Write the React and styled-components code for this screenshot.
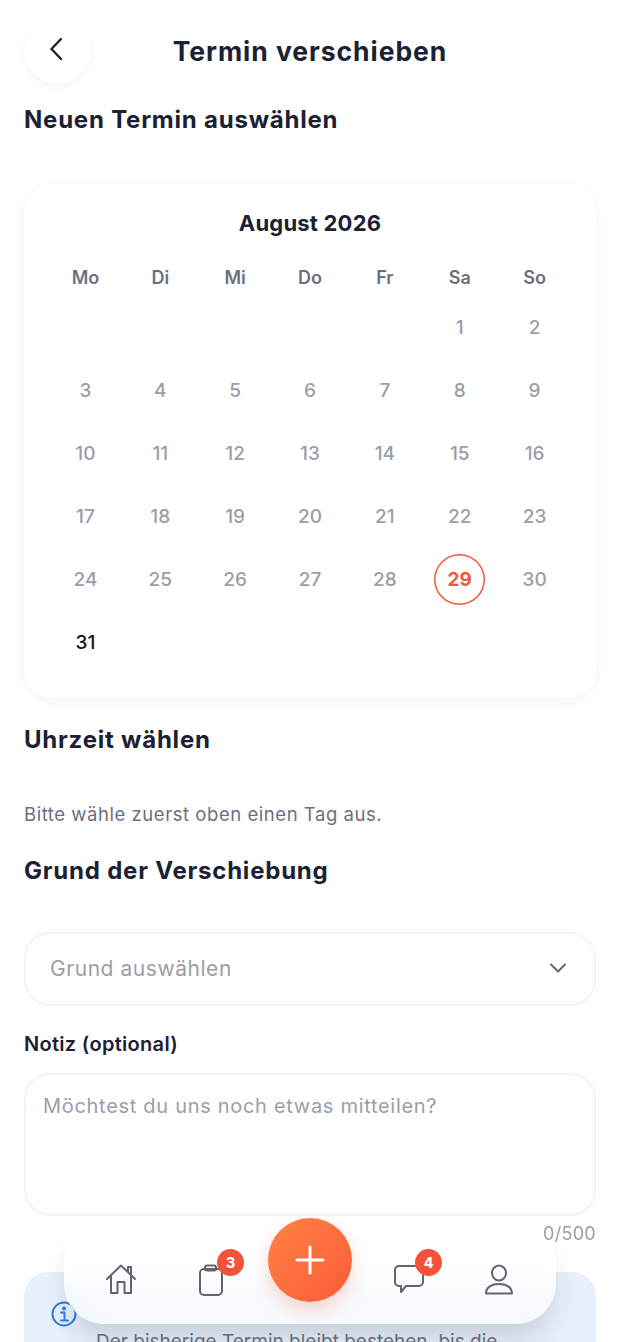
import React from "react"
import styled, { createGlobalStyle } from "styled-components"

const GlobalStyle = createGlobalStyle`
  html, body {
    margin: 0;
    padding: 0;
    height: 100%;
    overflow: hidden;
    background: #fff;
    font-family: "Inter", "Noto Sans", sans-serif;
  }
  * { box-sizing: border-box; }
`

const Screen = styled.div`
  position: relative;
  width: 620px;
  height: 1342px;
  overflow: hidden;
  background: #fff;
  color: #1b2033;
`

const Content = styled.div`
  padding: 18px 24px 0;
`

const Header = styled.div`
  position: relative;
  height: 66px;
  display: flex;
  align-items: center;
  justify-content: center;
`

const BackButton = styled.div`
  position: absolute;
  left: 0;
  top: 0;
  width: 66px;
  height: 66px;
  border-radius: 50%;
  background: #fff;
  box-shadow: 0 3px 10px rgba(27, 32, 51, 0.05);
  display: flex;
  align-items: center;
  justify-content: center;
  padding: 0 0 4px 0;
`

const Title = styled.h1`
  margin: 0;
  font-size: 26.5px;
  line-height: 34px;
  font-weight: 700;
  letter-spacing: 0.95px;
`

const SectionTitle = styled.h2`
  margin: ${p => p.$top || 0}px 0 0;
  font-size: 24px;
  line-height: 32px;
  font-weight: 700;
  letter-spacing: 0.78px;
`

const Card = styled.div`
  margin-top: 48px;
  height: 514px;
  padding: 24px 24px 0;
  border-radius: 28px;
  background: #fff;
  box-shadow: 0 3px 14px rgba(27, 32, 51, 0.05);
`

const Month = styled.div`
  text-align: center;
  font-size: 22px;
  line-height: 30px;
  font-weight: 700;
  letter-spacing: 0.2px;
`

const WeekDays = styled.div`
  display: grid;
  grid-template-columns: repeat(7, 1fr);
  margin-top: 27px;
`

const WeekDay = styled.div`
  text-align: center;
  font-size: 18px;
  line-height: 26px;
  font-weight: 600;
  color: #6b7080;
`

const Grid = styled.div`
  display: grid;
  grid-template-columns: repeat(7, 1fr);
  grid-auto-rows: 63px;
  margin-top: 5px;
`

const Cell = styled.div`
  display: flex;
  align-items: center;
  justify-content: center;
  font-size: 19px;
  font-weight: 500;
  color: ${p => (p.$active ? "#111" : "#9a9ea8")};
`

const Selected = styled.div`
  width: 51px;
  height: 51px;
  border-radius: 50%;
  box-shadow: inset 0 0 0 1.5px #f0583a;
  color: #f0583a;
  font-weight: 700;
  display: flex;
  align-items: center;
  justify-content: center;
`

const Hint = styled.p`
  margin: 45px 0 0;
  font-size: 18.5px;
  line-height: 26px;
  letter-spacing: 0.55px;
  color: #6b7080;
`

const SelectBox = styled.div`
  margin-top: 45px;
  height: 74px;
  padding: 0 26px 2px 24px;
  border: 2px solid #f3f4f6;
  border-radius: 26px;
  display: flex;
  align-items: center;
  justify-content: space-between;
  font-size: 21px;
  letter-spacing: 0.55px;
  color: #9a9ea8;
`

const FieldLabel = styled.div`
  margin-top: 23px;
  font-size: 20px;
  line-height: 30px;
  font-weight: 600;
  letter-spacing: 0.3px;
`

const NoteBox = styled.div`
  margin-top: 14px;
  height: 143px;
  padding: 17px 17px;
  border: 2px solid #f3f4f6;
  border-radius: 26px;
  font-size: 20px;
  line-height: 28px;
  letter-spacing: 0.7px;
  color: #9a9ea8;
`

const Counter = styled.div`
  position: relative;
  z-index: 2;
  margin-top: 5px;
  text-align: right;
  font-size: 18px;
  line-height: 26px;
  letter-spacing: 0.3px;
  color: #9a9ea8;
`

const InfoBox = styled.div`
  margin-top: 25px;
  height: 200px;
  padding: 29px 26px 0 27px;
  border-radius: 24px;
  background: #e8f0fb;
  display: flex;
  align-items: flex-start;
  gap: 19px;
  color: #6b7080;
`

const InfoText = styled.p`
  margin: 28px 0 0;
  flex: 1;
  font-size: 19px;
  line-height: 26px;
`

const Nav = styled.div`
  position: absolute;
  left: 64px;
  right: 64px;
  bottom: 18px;
  height: 104px;
  padding: 44px 12px 0;
  border-radius: 40px;
  background: linear-gradient(180deg, rgba(255, 255, 255, 0.92) 0%, rgba(255, 255, 255, 0.62) 100%);
  backdrop-filter: blur(14px);
  box-shadow: 0 20px 28px -6px rgba(30, 40, 70, 0.17);
  display: grid;
  grid-template-columns: 90px 90px 108px 90px 90px;
  align-items: start;
  justify-items: center;
`

const NavItem = styled.div`
  position: relative;
  display: flex;
`

const Badge = styled.div`
  position: absolute;
  left: ${p => p.$x}px;
  top: -15px;
  width: 27px;
  height: 27px;
  border-radius: 50%;
  background: #f4533a;
  color: #fff;
  font-size: 14px;
  font-weight: 800;
  display: flex;
  align-items: center;
  justify-content: center;
`

const Fab = styled.div`
  margin-top: -46px;
  width: 84px;
  height: 84px;
  border-radius: 50%;
  background: linear-gradient(135deg, #ff8343 0%, #fb5a38 100%);
  box-shadow: 0 8px 18px rgba(240, 88, 58, 0.25);
  display: flex;
  align-items: center;
  justify-content: center;
`

const calendarRows = [
  [null, null, null, null, null, 1, 2],
  [3, 4, 5, 6, 7, 8, 9],
  [10, 11, 12, 13, 14, 15, 16],
  [17, 18, 19, 20, 21, 22, 23],
  [24, 25, 26, 27, 28, 29, 30],
  [31, null, null, null, null, null, null],
]

const days = ["Mo", "Di", "Mi", "Do", "Fr", "Sa", "So"]

const stroke = { fill: "none", stroke: "#5f6470", strokeWidth: 2, strokeLinecap: "round", strokeLinejoin: "round" }

const App = () => (
  <Screen>
    <GlobalStyle />
    <Content>
      <Header>
        <BackButton>
          <svg width="28" height="28" viewBox="0 0 28 28" fill="none" stroke="#1b2033" strokeWidth="2.4" strokeLinecap="round" strokeLinejoin="round">
            <path d="M18 4 L8.5 14 L18 24" />
          </svg>
        </BackButton>
        <Title>Termin verschieben</Title>
      </Header>
      <SectionTitle $top={20}>Neuen Termin auswählen</SectionTitle>
      <Card>
        <Month>August 2026</Month>
        <WeekDays>
          {days.map(d => <WeekDay key={d}>{d}</WeekDay>)}
        </WeekDays>
        <Grid>
          {calendarRows.flat().map((d, i) => (
            <Cell key={i} $active={d === 31}>
              {d === 29 ? <Selected>{d}</Selected> : d}
            </Cell>
          ))}
        </Grid>
      </Card>
      <SectionTitle $top={26}>Uhrzeit wählen</SectionTitle>
      <Hint>Bitte wähle zuerst oben einen Tag aus.</Hint>
      <SectionTitle $top={28}>Grund der Verschiebung</SectionTitle>
      <SelectBox>
        Grund auswählen
        <svg width="20" height="20" viewBox="0 0 20 20" fill="none" stroke="#5f6470" strokeWidth="2" strokeLinecap="round" strokeLinejoin="round">
          <path d="M3 6.5 L10 13.5 L17 6.5" />
        </svg>
      </SelectBox>
      <FieldLabel>Notiz (optional)</FieldLabel>
      <NoteBox>Möchtest du uns noch etwas mitteilen?</NoteBox>
      <Counter>0/500</Counter>
      <InfoBox>
        <svg width="26" height="26" viewBox="0 0 26 26" fill="none" stroke="#2f7fd8" strokeWidth="2" strokeLinecap="round" strokeLinejoin="round">
          <circle cx="13" cy="13" r="11.5" />
          <path d="M10 11.5 H13.5 V19 M10 19.5 H17" />
          <circle cx="13" cy="7.5" r="1" fill="#2f7fd8" />
        </svg>
        <InfoText>Der bisherige Termin bleibt bestehen, bis die Änderung bestätigt wurde.</InfoText>
      </InfoBox>
    </Content>
    <Nav>
      <NavItem>
        <svg width="32" height="31" viewBox="0 0 32 31" {...stroke}>
          <path d="M2 15 L16 1.5 L30 15 M23 8 V3 H26 V11.5 M6 12 V29 H12.5 V18 H19.5 V29 H26 V12" />
        </svg>
      </NavItem>
      <NavItem>
        <svg width="26" height="32" viewBox="0 0 26 32" {...stroke}>
          <rect x="2" y="5" width="22" height="26" rx="4" />
          <rect x="7" y="1.5" width="11" height="5" rx="2" />
        </svg>
        <Badge $x={19}>3</Badge>
      </NavItem>
      <Fab>
        <svg width="30" height="30" viewBox="0 0 30 30" fill="none" stroke="#fff" strokeWidth="3" strokeLinecap="round">
          <path d="M15 2 V28 M2 15 H28" />
        </svg>
      </Fab>
      <NavItem>
        <svg width="32" height="30" viewBox="0 0 32 30" {...stroke}>
          <path d="M6 2 H26 A4 4 0 0 1 30 6 V18 A4 4 0 0 1 26 22 H13 L8 28 V22 H6 A4 4 0 0 1 2 18 V6 A4 4 0 0 1 6 2 Z" />
        </svg>
        <Badge $x={22}>4</Badge>
      </NavItem>
      <NavItem>
        <svg width="30" height="31" viewBox="0 0 30 31" {...stroke}>
          <ellipse cx="15" cy="9" rx="7" ry="7.5" />
          <path d="M2 29.5 C2 23 8 20 15 20 C22 20 28 23 28 29.5 Z" />
        </svg>
      </NavItem>
    </Nav>
  </Screen>
)

export default App
